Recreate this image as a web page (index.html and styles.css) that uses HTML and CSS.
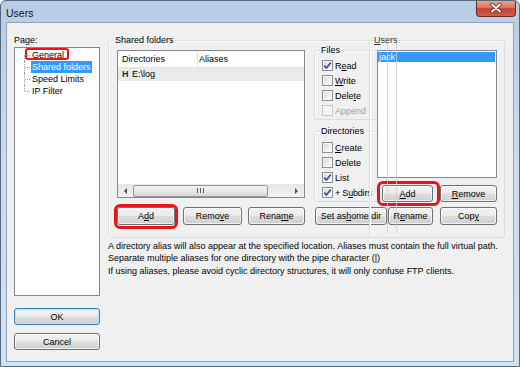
FILE: index.html
```html
<!DOCTYPE html>
<html>
<head>
<meta charset="utf-8">
<title>Users</title>
<link rel="stylesheet" href="styles.css">
</head>
<body>
<div class="window">
  <div class="titlebar">
    <span class="title">Users</span>
    <div class="close">
      <svg width="14" height="10" viewBox="0 0 14 10"><path d="M3 1.5 L11 8.5 M11 1.5 L3 8.5" stroke="#5a1a10" stroke-width="3.4" stroke-linecap="round"/><path d="M3 1.5 L11 8.5 M11 1.5 L3 8.5" stroke="#ffffff" stroke-width="2" stroke-linecap="round"/></svg>
    </div>
  </div>
  <div class="client">
    <div class="left">
      <div class="plabel">Page:</div>
      <div class="tree">
        <div class="node root"><span class="ntext hl hl-gen">General</span></div>
        <div class="node"><span class="ntext sel">Shared folders</span></div>
        <div class="node"><span class="ntext">Speed Limits</span></div>
        <div class="node last"><span class="ntext">IP Filter</span></div>
      </div>
      <div class="btn ok">OK</div>
      <div class="btn cancel">Cancel</div>
    </div>
    <div class="right">
      <div class="group shared">
        <span class="glabel">Shared folders</span>
        <div class="shared-top">
          <div class="listview">
            <div class="lv-head">
              <div class="lv-col c1">Directories</div>
              <div class="lv-col c2">Aliases</div>
            </div>
            <div class="lv-row"><b class="home">H</b><span>E:\log</span></div>
            <div class="lv-fill"></div>
            <div class="hscroll">
              <div class="sarrow"><span class="tri-left"></span></div>
              <div class="thumb"><span class="grip"></span></div>
              <div class="track"></div>
              <div class="sarrow"><span class="tri-right"></span></div>
            </div>
          </div>
          <div class="perms">
            <div class="group files">
              <span class="glabel">Files</span>
              <div class="cbrow"><span class="cb on"><svg width="9" height="9" viewBox="0 0 9 9"><path d="M1.2 4.6 L3.4 7 L7.8 1.6" fill="none" stroke="#3c4f86" stroke-width="1.7"/></svg></span><span>R<u>e</u>ad</span></div>
              <div class="cbrow"><span class="cb"></span><span><u>W</u>rite</span></div>
              <div class="cbrow"><span class="cb"></span><span>Dele<u>t</u>e</span></div>
              <div class="cbrow dis"><span class="cb"></span><span>Append</span></div>
            </div>
            <div class="group dirs">
              <span class="glabel">Directories</span>
              <div class="cbrow"><span class="cb"></span><span><u>C</u>reate</span></div>
              <div class="cbrow"><span class="cb"></span><span>Delete</span></div>
              <div class="cbrow"><span class="cb on"><svg width="9" height="9" viewBox="0 0 9 9"><path d="M1.2 4.6 L3.4 7 L7.8 1.6" fill="none" stroke="#3c4f86" stroke-width="1.7"/></svg></span><span>List</span></div>
              <div class="cbrow"><span class="cb on"><svg width="9" height="9" viewBox="0 0 9 9"><path d="M1.2 4.6 L3.4 7 L7.8 1.6" fill="none" stroke="#3c4f86" stroke-width="1.7"/></svg></span><span class="tight">+ S<u>u</u>bdirs</span></div>
            </div>
          </div>
        </div>
        <div class="btnrow">
          <div class="btn b-add hl hl-add">A<u>d</u>d</div>
          <div class="btn b-remove">Remo<u>v</u>e</div>
          <div class="btn b-rename">Rena<u>m</u>e</div>
          <div class="btn b-home">Set as <u>h</u>ome dir</div>
          <div class="btn b-rename2">R<u>e</u>name</div>
          <div class="btn b-copy">Cop<u>y</u></div>
        </div>
        <div class="group users">
          <span class="glabel ulabel"><u>U</u>sers</span>
          <div class="listbox">
            <div class="lb-row sel">jack</div>
          </div>
          <div class="ubtns">
            <div class="btn u-add hl hl-uadd"><u>A</u>dd</div>
            <div class="btn u-remove"><u>R</u>emove</div>
          </div>
          <span class="ghost g1"></span>
          <span class="ghost g2"></span>
        </div>
      </div>
      <p class="desc d1">A directory alias will also appear at the specified location. Aliases must contain the full virtual path.<br>Separate multiple aliases for one directory with the pipe character (|)</p>
      <p class="desc d2">If using aliases, please avoid cyclic directory structures, it will only confuse FTP clients.</p>
    </div>
  </div>
</div>
</body>
</html>
```

FILE: styles.css
```css
body {
  margin: 0;
  font-family: "Liberation Sans", Arial, sans-serif;
  font-size: 9px;
  color: #000;
  background: #fff;
}

.window {
  width: 520px;
  height: 367px;
  box-sizing: border-box;
  border: 1px solid #56697f;
  border-radius: 6px 6px 0 0;
  background: linear-gradient(180deg, #b7cce5 0%, #c8daee 35%, #d2e1f1 100%);
  display: flex;
  flex-direction: column;
  overflow: hidden;
}

.titlebar {
  height: 21px;
  display: flex;
  align-items: flex-start;
  padding-left: 5px;
}

.title {
  font-size: 10.5px;
  line-height: 12px;
  margin-top: 6px;
  color: #141414;
}

.close {
  margin-left: auto;
  margin-right: 3px;
  margin-top: -1px;
  width: 40px;
  height: 17px;
  box-sizing: border-box;
  border: 1px solid #6b2a20;
  border-top: none;
  border-radius: 0 0 4px 4px;
  background: linear-gradient(180deg, #e9a596 0%, #dd7a66 45%, #c5432c 55%, #d26048 100%);
  display: flex;
  align-items: center;
  justify-content: center;
}

.client {
  margin: 0 5px;
  height: 340px;
  box-sizing: border-box;
  border: 1px solid #8fa4bc;
  background: #f0f0f0;
  display: flex;
  padding: 11px 0 0 7px;
}

/* left column */
.left {
  width: 86px;
  display: flex;
  flex-direction: column;
}

.plabel {
  height: 12px;
  line-height: 12px;
}

.tree {
  margin-top: 1px;
  height: 249px;
  box-sizing: border-box;
  border: 1px solid #828790;
  background: #fff;
  padding-top: 1px;
}

.node {
  position: relative;
  height: 12px;
  padding-left: 16px;
}

.node::before {
  content: "";
  position: absolute;
  left: 9px;
  top: 0;
  bottom: 0;
  border-left: 1px dotted #a0a0a0;
}

.node.root::before { top: 6px; }
.node.last::before { bottom: 6px; }

.node::after {
  content: "";
  position: absolute;
  left: 10px;
  width: 5px;
  top: 6px;
  border-top: 1px dotted #a0a0a0;
}

.ntext {
  display: inline-block;
  height: 12px;
  line-height: 12px;
  padding: 0 1px;
  white-space: nowrap;
}

.ntext.sel {
  background: #3399ff;
  color: #fff;
}

/* buttons */
.btn {
  box-sizing: border-box;
  height: 18px;
  border: 1px solid #707070;
  border-radius: 3px;
  background: linear-gradient(180deg, #f2f2f2 0%, #ebebeb 48%, #dddddd 52%, #cfcfcf 100%);
  box-shadow: inset 0 0 0 1px rgba(255, 255, 255, 0.7);
  display: flex;
  align-items: center;
  justify-content: center;
  white-space: nowrap;
  color: #000;
}

.ok {
  margin-top: 12px;
  height: 17px;
  border-color: #3c7fb1;
  box-shadow: inset 0 0 0 1px #b9e3f7;
}

.cancel {
  margin-top: 8px;
  height: 17px;
}

/* right area */
.right {
  margin-left: 8px;
  width: 397px;
}

.group {
  position: relative;
  box-sizing: border-box;
  border: 1px solid #d5dfe5;
  border-radius: 3px;
  box-shadow: inset 1px 1px 0 #ffffff;
}

.glabel {
  position: absolute;
  top: -7px;
  left: 5px;
  padding: 0 1px;
  line-height: 12px;
  background: #f0f0f0;
  white-space: nowrap;
}

.shared {
  margin-top: 6px;
  height: 198px;
  padding: 9px 0 0 8px;
}

.shared-top {
  display: flex;
  align-items: flex-start;
}

.listview {
  width: 188px;
  height: 148px;
  box-sizing: border-box;
  border: 1px solid #828790;
  background: #fff;
  display: flex;
  flex-direction: column;
}

.lv-head {
  display: flex;
  height: 16px;
  border-bottom: 1px solid #e5e5e5;
  line-height: 16px;
}

.lv-col.c1 {
  width: 80px;
  padding-left: 4px;
  box-sizing: border-box;
  border-right: 1px solid #e5e5e5;
}

.lv-col.c2 {
  padding-left: 1px;
}

.lv-row {
  height: 13px;
  line-height: 13px;
  background: #eaeaea;
  padding-left: 4px;
  display: flex;
}

.home {
  width: 10px;
  font-weight: bold;
  color: #1b2b45;
}

.lv-fill { flex: 1; }

.hscroll {
  height: 13px;
  display: flex;
  align-items: center;
  background: linear-gradient(180deg, #e6e6e6, #f2f2f2);
}

.sarrow {
  width: 15px;
  height: 13px;
  display: flex;
  align-items: center;
  justify-content: center;
}

.tri-left {
  width: 0;
  height: 0;
  border-top: 3px solid transparent;
  border-bottom: 3px solid transparent;
  border-right: 3px solid #4f4f4f;
}

.tri-right {
  width: 0;
  height: 0;
  border-top: 3px solid transparent;
  border-bottom: 3px solid transparent;
  border-left: 3px solid #4f4f4f;
}

.thumb {
  width: 135px;
  height: 12px;
  box-sizing: border-box;
  border: 1px solid #979797;
  border-radius: 2px;
  background: linear-gradient(180deg, #f4f4f4 0%, #e8e8e8 50%, #d6d6d6 100%);
  display: flex;
  align-items: center;
  justify-content: center;
}

.grip {
  width: 7px;
  height: 5px;
  background: repeating-linear-gradient(90deg, #5f5f5f 0 1px, transparent 1px 3px);
}

.track { flex: 1; }

.perms {
  margin-left: 9px;
  width: 73px;
}

.files {
  height: 70px;
  padding: 7px 0 0 7px;
}

.dirs {
  margin-top: 11px;
  height: 71px;
  padding: 8px 0 0 7px;
}

.cbrow {
  height: 15px;
  display: flex;
  align-items: center;
  white-space: nowrap;
}

.tight { letter-spacing: -0.2px; }

.cb {
  width: 11px;
  height: 11px;
  box-sizing: border-box;
  border: 1px solid #8e8f8f;
  background: linear-gradient(135deg, #d6d6d6 0%, #f4f4f4 70%, #ffffff 100%);
  box-shadow: inset 0 0 0 1px #f6f6f6;
  margin-right: 2px;
  display: flex;
  align-items: center;
  justify-content: center;
  flex-shrink: 0;
}

.dis { color: #a0a0a0; }
.dis .cb {
  border-color: #c6c6c6;
  background: #f4f4f4;
}

.btnrow {
  display: flex;
  margin-top: 5px;
}

.b-add { width: 58px; }
.b-remove { width: 59px; margin-left: 8px; }
.b-rename { width: 57px; margin-left: 6px; }
.b-home { width: 72px; margin-left: 10px; }
.b-rename2 { width: 45px; margin-left: 1px; }
.b-copy { width: 57px; margin-left: 7px; }

/* users group laid over the shared folders group */
.users {
  position: absolute;
  left: 260px;
  top: -1px;
  width: 136px;
  height: 198px;
  padding: 9px 0 0 7px;
}

.ulabel {
  left: 3px;
  background: transparent;
  color: #333;
}

.listbox {
  width: 120px;
  height: 128px;
  box-sizing: border-box;
  border: 1px solid #828790;
  background: #fff;
  padding: 1px 1px 0 0;
}

.lb-row {
  height: 10px;
  line-height: 10px;
  padding-left: 1px;
}

.lb-row.sel {
  background: #3399ff;
  color: #fff;
}

.ubtns {
  display: flex;
  margin-top: 7px;
}

.u-add { width: 51px; height: 17px; margin-left: 5px; }
.u-remove { width: 57px; height: 17px; margin-left: 7px; }

.ghost {
  position: absolute;
  top: 2px;
  height: 190px;
  width: 1px;
  background: rgba(205, 205, 205, 0.8);
}

.g1 { left: 17px; }
.g2 { left: 26px; }

/* red annotation boxes */
.hl { position: relative; }
.hl::after {
  content: "";
  position: absolute;
  border: 3px solid #e8141c;
  border-radius: 6px;
  pointer-events: none;
}

.hl-gen::after { left: -6px; right: -4px; top: -1px; bottom: 1px; border-width: 2px; border-radius: 3px; }
.hl-add::after { left: -4px; right: -4px; top: -4px; bottom: -5px; }
.hl-uadd::after { left: -6px; right: -8px; top: -5px; bottom: -5px; }

.desc {
  margin: 0;
  line-height: 12px;
  white-space: nowrap;
}

.d1 { margin-top: 2px; }
.d2 { margin-top: 1px; }
```
